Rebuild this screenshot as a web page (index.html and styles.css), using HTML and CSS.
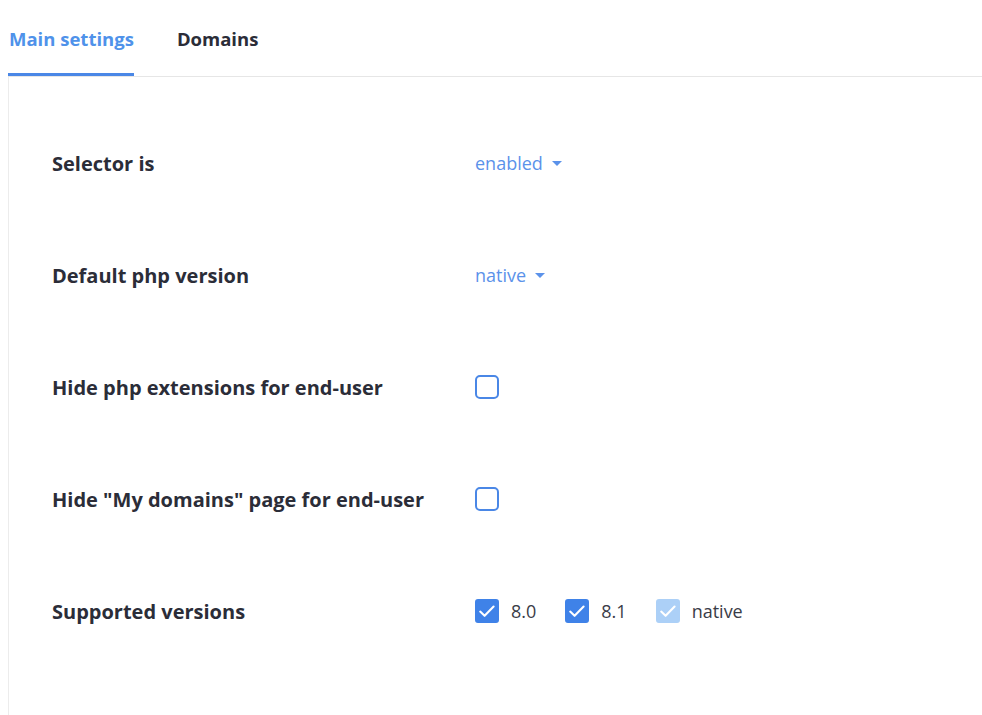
FILE: index.html
```html
<!DOCTYPE html>
<html>
<head>
<meta charset="utf-8">
<link rel="stylesheet" href="styles.css">
</head>
<body>
<div class="page">
  <div class="tabs">
    <div class="tab active">Main settings</div>
    <div class="tab">Domains</div>
  </div>
  <div class="content">
    <div class="row">
      <div class="label">Selector is</div>
      <div class="value"><span class="dropdown">enabled <span class="caret"></span></span></div>
    </div>
    <div class="row">
      <div class="label">Default php version</div>
      <div class="value"><span class="dropdown">native <span class="caret"></span></span></div>
    </div>
    <div class="row">
      <div class="label">Hide php extensions for end-user</div>
      <div class="value"><span class="cb"></span></div>
    </div>
    <div class="row">
      <div class="label">Hide "My domains" page for end-user</div>
      <div class="value"><span class="cb"></span></div>
    </div>
    <div class="row">
      <div class="label">Supported versions</div>
      <div class="value versions">
        <label class="ver"><span class="cb checked"><svg viewBox="0 0 24 24" width="24" height="24"><path d="M5.2 12.6 L9.6 16.8 L18.6 7.6" fill="none" stroke="#fff" stroke-width="2.1" stroke-linecap="round" stroke-linejoin="round"/></svg></span><span class="vtext">8.0</span></label>
        <label class="ver"><span class="cb checked"><svg viewBox="0 0 24 24" width="24" height="24"><path d="M5.2 12.6 L9.6 16.8 L18.6 7.6" fill="none" stroke="#fff" stroke-width="2.1" stroke-linecap="round" stroke-linejoin="round"/></svg></span><span class="vtext">8.1</span></label>
        <label class="ver"><span class="cb checked disabled"><svg viewBox="0 0 24 24" width="24" height="24"><path d="M5.2 12.6 L9.6 16.8 L18.6 7.6" fill="none" stroke="#fff" stroke-width="2.1" stroke-linecap="round" stroke-linejoin="round"/></svg></span><span class="vtext">native</span></label>
      </div>
    </div>
  </div>
</div>
</body>
</html>
```
FILE: styles.css
```css
html, body {
  margin: 0;
  padding: 0;
  background: #fff;
}
body {
  font-family: "Open Sans", "Noto Sans", sans-serif;
  color: #2b2d38;
}
.page {
  padding-left: 8px;
  height: 715px;
  box-sizing: border-box;
}
.tabs {
  display: flex;
  height: 77px;
  border-bottom: 1px solid #e6e6e6;
  box-sizing: border-box;
  align-items: stretch;
}
.tab {
  font-weight: 700;
  font-size: 18.5px;
  padding-top: 26px;
  padding-left: 1px;
  margin-right: 42px;
  box-sizing: border-box;
  color: #2b2d38;
}
.tab.active {
  color: #4f92ea;
  border-bottom: 3px solid #4a87e6;
}
.content {
  border-left: 1px solid #ececec;
  height: 638px;
  padding-top: 30px;
  box-sizing: border-box;
}
.row {
  display: flex;
  align-items: center;
  height: 112px;
}
.label {
  width: 423px;
  padding-left: 43px;
  font-weight: 700;
  font-size: 20px;
  color: #2b2d38;
}
.value {
  display: flex;
  align-items: center;
}
.dropdown {
  color: #5b92ea;
  font-size: 18px;
  display: inline-flex;
  align-items: center;
}
.caret {
  display: inline-block;
  width: 0;
  height: 0;
  border-left: 5px solid transparent;
  border-right: 5px solid transparent;
  border-top: 5px solid #5b92ea;
  margin-left: 9px;
}
.cb {
  width: 24px;
  height: 24px;
  box-sizing: border-box;
  border: 2px solid #4a87e6;
  border-radius: 5px;
  display: inline-flex;
  align-items: center;
  justify-content: center;
  background: #fff;
}
.cb.checked {
  background: #3f82e8;
  border-color: #3f82e8;
  border-radius: 3px;
}
.cb.disabled {
  background: #acd0f7;
  border-color: #acd0f7;
}
.cb svg {
  flex: none;
}
.ver {
  display: inline-flex;
  align-items: center;
  margin-right: 29px;
}
.vtext {
  margin-left: 12px;
  font-size: 18px;
  color: #3a3c47;
}
```
